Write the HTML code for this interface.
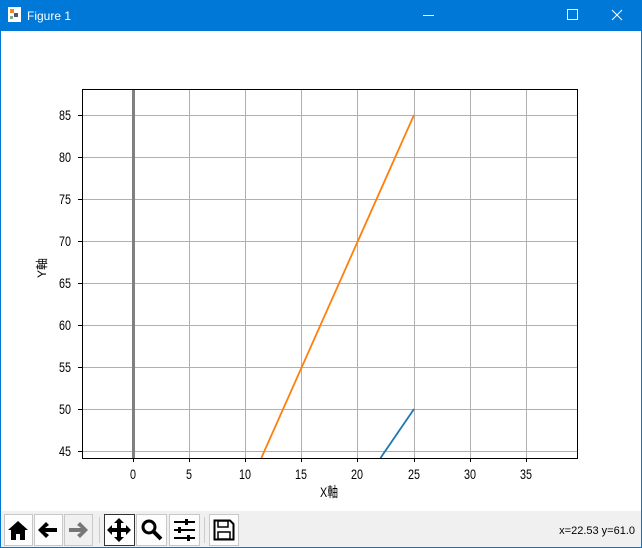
<!DOCTYPE html>
<html><head><meta charset="utf-8"><style>
html,body{margin:0;padding:0;width:642px;height:548px;overflow:hidden;background:#fff;}
svg{display:block}
text{font-family:"Liberation Sans","Noto Sans CJK JP",sans-serif;}
</style></head><body>
<svg width="642" height="548" viewBox="0 0 642 548" xmlns="http://www.w3.org/2000/svg">
<rect x="0" y="0" width="642" height="548" fill="#0078d7"/>
<rect x="1" y="31" width="640" height="516" fill="#fff"/>
<rect x="8" y="7" width="13" height="15" fill="#fff"/>
<rect x="10" y="9" width="4" height="4" fill="#e08a3c"/><rect x="14" y="13" width="4" height="4" fill="#556"/><rect x="10" y="16" width="3" height="3" fill="#8a8"/>
<text x="27" y="20" font-size="12" fill="#fff">Figure 1</text>
<rect x="423" y="15" width="11" height="1" fill="#fff"/>
<rect x="567.5" y="9.5" width="10" height="10" fill="none" stroke="#fff"/>
<path d="M612 10 L622 20 M622 10 L612 20" stroke="#fff" stroke-width="1"/>
<g stroke="#b0b0b0" stroke-width="1">
<path d="M189.5 89V458M245.5 89V458M301.5 89V458M357.5 89V458M414.5 89V458M470.5 89V458M526.5 89V458"/>
<path d="M82 115.5H577M82 157.5H577M82 199.5H577M82 241.5H577M82 283.5H577M82 325.5H577M82 367.5H577M82 409.5H577M82 451.5H577"/>
</g>
<rect x="132" y="89" width="3" height="369" fill="#808080"/>
<path d="M261.3 458 L414 115" stroke="#ff7f0e" stroke-width="1.8" fill="none"/>
<path d="M380.5 458 L414 409" stroke="#1f77b4" stroke-width="1.8" fill="none"/>
<rect x="82.5" y="89.5" width="495" height="369" fill="none" stroke="#000" stroke-width="1"/>
<g stroke="#000"><path d="M133.5 458v4M189.5 458v4M245.5 458v4M301.5 458v4M357.5 458v4M414.5 458v4M470.5 458v4M526.5 458v4"/>
<path d="M78 115.5h4M78 157.5h4M78 199.5h4M78 241.5h4M78 283.5h4M78 325.5h4M78 367.5h4M78 409.5h4M78 451.5h4"/></g>
<g font-size="14" fill="#000" text-anchor="middle">
<text x="133" y="479" textLength="6" lengthAdjust="spacingAndGlyphs">0</text><text x="189" y="479" textLength="6" lengthAdjust="spacingAndGlyphs">5</text><text x="245" y="479" textLength="12" lengthAdjust="spacingAndGlyphs">10</text><text x="301" y="479" textLength="12" lengthAdjust="spacingAndGlyphs">15</text><text x="357" y="479" textLength="12" lengthAdjust="spacingAndGlyphs">20</text><text x="414" y="479" textLength="12" lengthAdjust="spacingAndGlyphs">25</text><text x="470" y="479" textLength="12" lengthAdjust="spacingAndGlyphs">30</text><text x="526" y="479" textLength="12" lengthAdjust="spacingAndGlyphs">35</text>
<text x="329" y="497" textLength="18" lengthAdjust="spacingAndGlyphs">X軸</text>
</g>
<g font-size="14" fill="#000" text-anchor="end">
<text x="71" y="120" textLength="12" lengthAdjust="spacingAndGlyphs">85</text><text x="71" y="162" textLength="12" lengthAdjust="spacingAndGlyphs">80</text><text x="71" y="204" textLength="12" lengthAdjust="spacingAndGlyphs">75</text><text x="71" y="246" textLength="12" lengthAdjust="spacingAndGlyphs">70</text><text x="71" y="288" textLength="12" lengthAdjust="spacingAndGlyphs">65</text><text x="71" y="330" textLength="12" lengthAdjust="spacingAndGlyphs">60</text><text x="71" y="372" textLength="12" lengthAdjust="spacingAndGlyphs">55</text><text x="71" y="414" textLength="12" lengthAdjust="spacingAndGlyphs">50</text><text x="71" y="456" textLength="12" lengthAdjust="spacingAndGlyphs">45</text>
</g>
<text x="0" y="0" font-size="12" transform="translate(46 268) rotate(-90)" text-anchor="middle">Y軸</text>
<rect x="1" y="511" width="640" height="36" fill="#f0f0f0"/>
<g fill="#fdfdfd" stroke="#c8c8c8">
<rect x="4.5" y="514.5" width="28" height="31"/><rect x="34.5" y="514.5" width="28" height="31"/><rect x="64.5" y="514.5" width="28" height="31" fill="#f0f0f0"/>
<rect x="136.5" y="514.5" width="30" height="31"/><rect x="169.5" y="514.5" width="30" height="31"/><rect x="209.5" y="514.5" width="29" height="31"/>
</g>
<rect x="104.5" y="514.5" width="30" height="31" fill="#fff" stroke="#333"/>
<path d="M99.5 517v26M204.5 517v26" stroke="#ccc"/>
<path d="M8 530 L18 521 L28 530 L25 530 L25 540 L20 540 L20 534 L16 534 L16 540 L11 540 L11 530 Z" fill="#000"/>
<path d="M38 530 L46 522 L49 525 L45 528 L57 528 L57 532 L45 532 L49 535 L46 538 Z" fill="#000"/>
<path d="M88 530 L80 522 L77 525 L81 528 L69 528 L69 532 L81 532 L77 535 L80 538 Z" fill="#777"/>
<path d="M119 518 L124 523 H121 V528 H126 V525 L131 530 L126 535 V532 H121 V537 H124 L119 542 L114 537 H117 V532 H112 V535 L107 530 L112 525 V528 H117 V523 H114 Z" fill="#000"/>
<circle cx="149" cy="527" r="6" fill="none" stroke="#000" stroke-width="3"/>
<path d="M153 531 L161 539" stroke="#000" stroke-width="4"/>
<g stroke="#000" stroke-width="2"><path d="M174 522h21M174 530h21M174 538h21"/></g>
<rect x="185" y="519" width="3" height="6" fill="#000"/><rect x="178" y="527" width="3" height="6" fill="#000"/><rect x="187" y="535" width="3" height="6" fill="#000"/>
<path d="M214.5 520.5 H230 L233.5 524 V539.5 H214.5 Z" fill="none" stroke="#000" stroke-width="2"/>
<rect x="218" y="521" width="10" height="6" fill="none" stroke="#000" stroke-width="1.5"/>
<rect x="218" y="532" width="12" height="7" fill="none" stroke="#000" stroke-width="1.5"/>
<text x="635" y="534" font-size="11" text-anchor="end" fill="#000">x=22.53 y=61.0</text>
</svg>
</body></html>
